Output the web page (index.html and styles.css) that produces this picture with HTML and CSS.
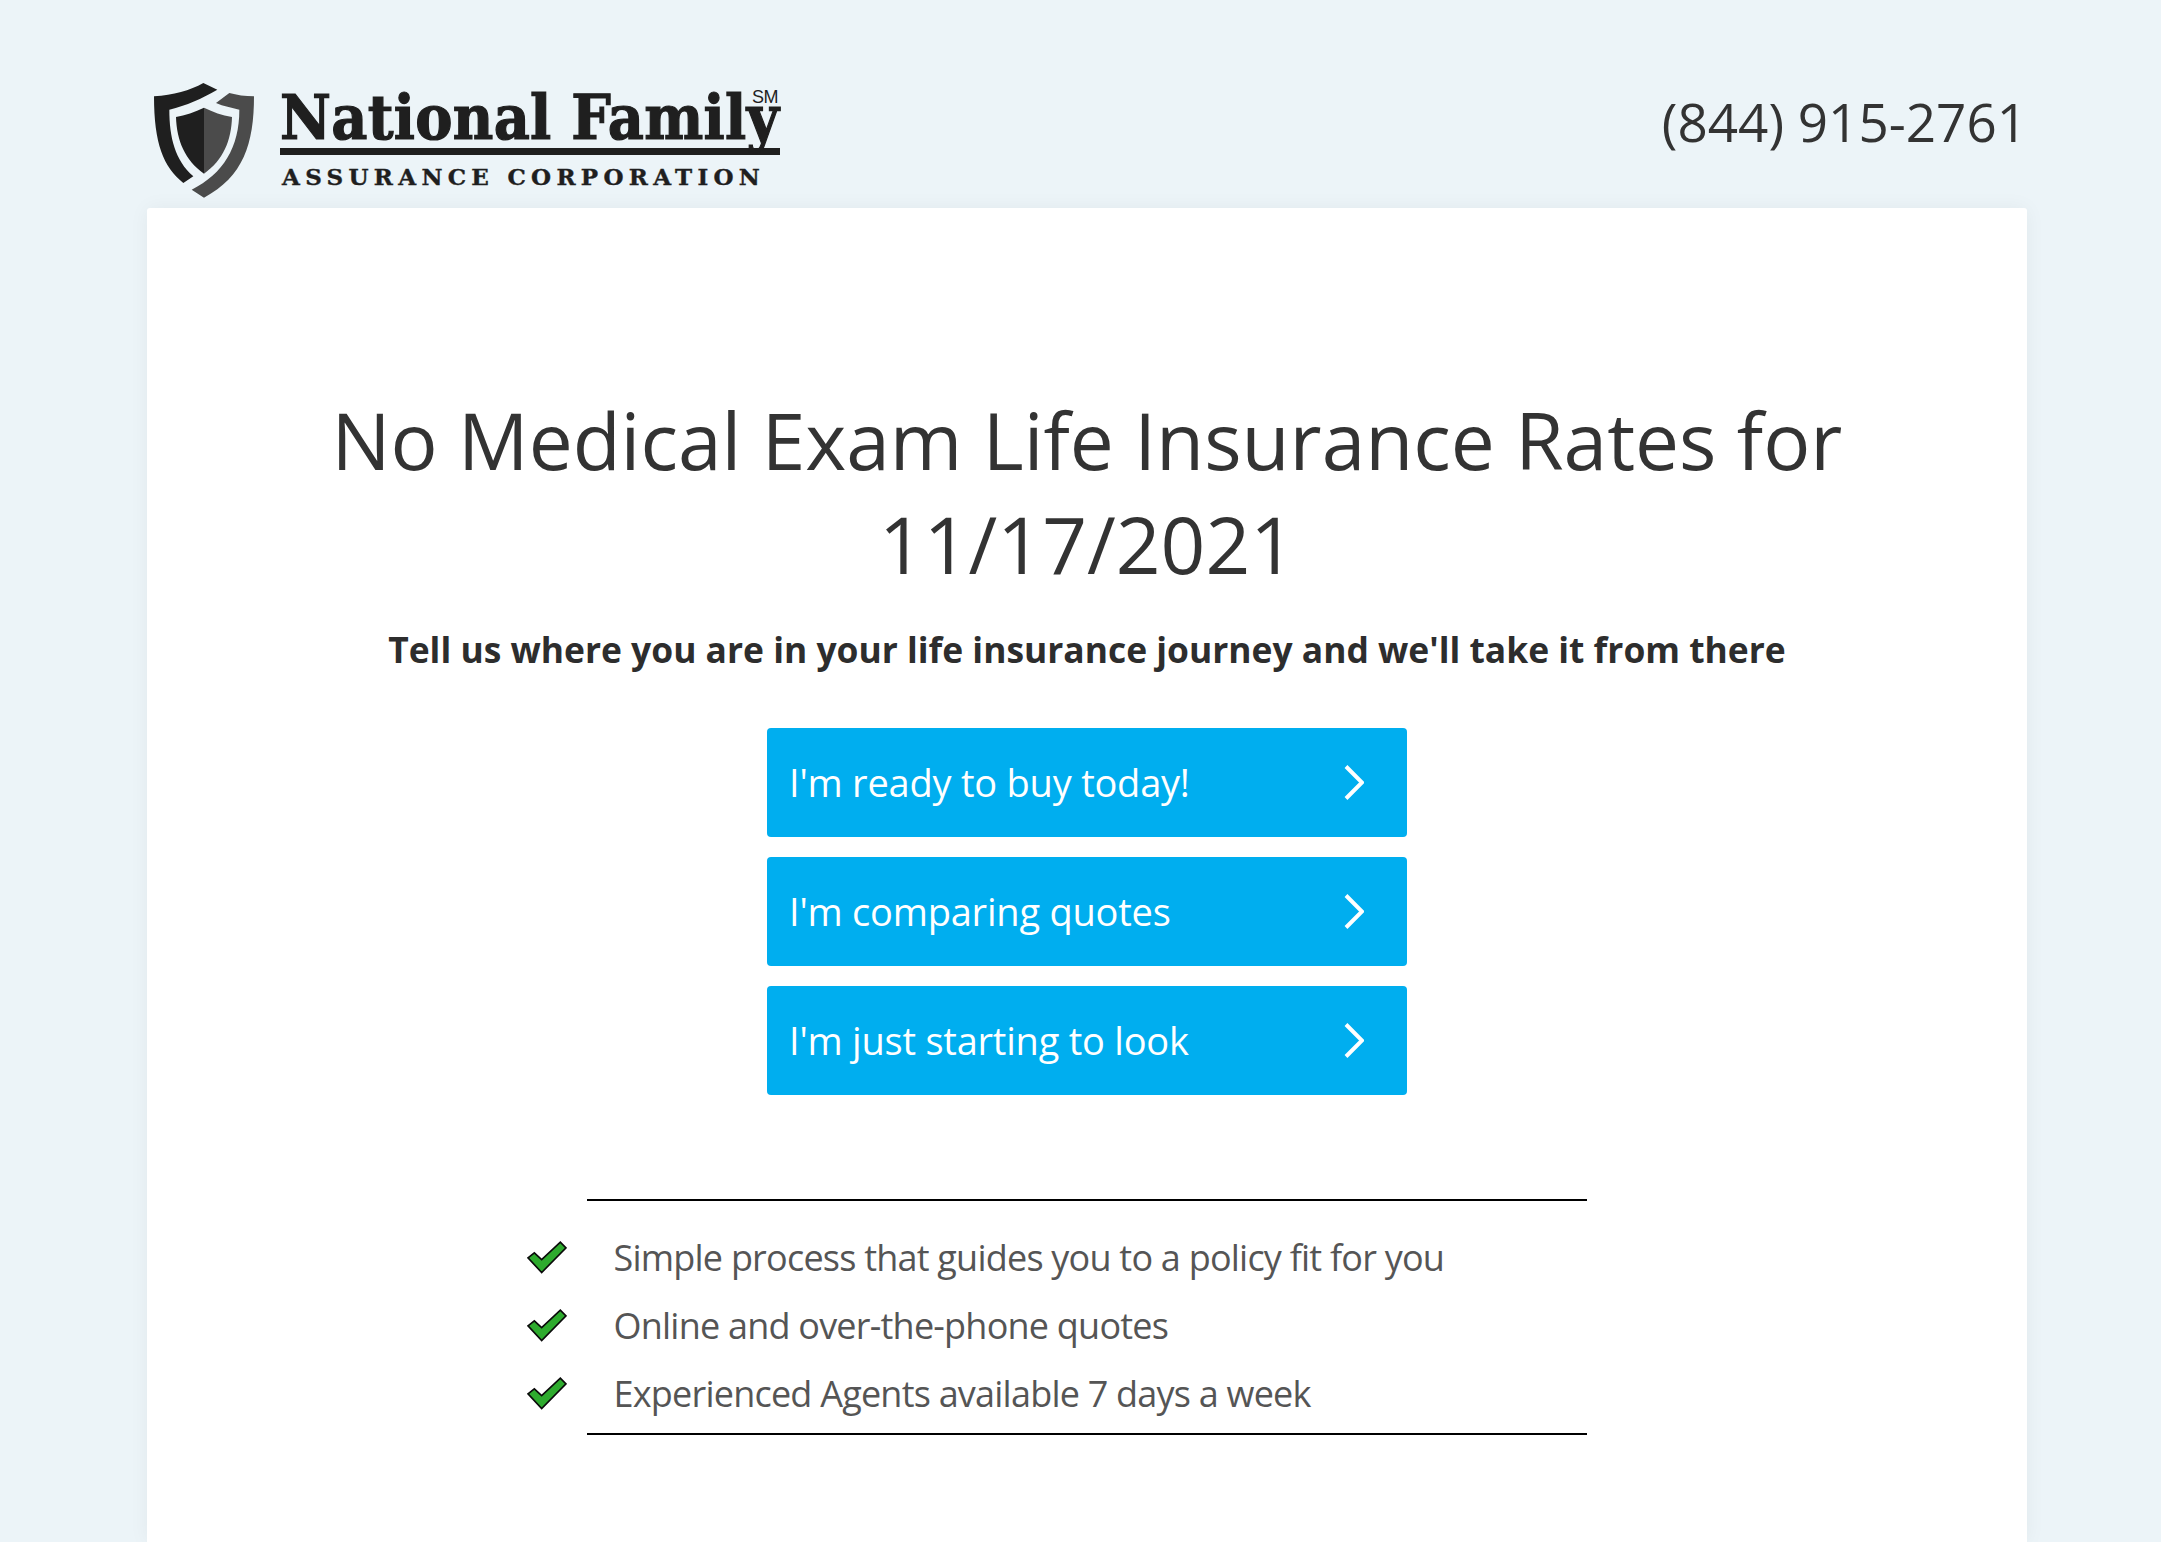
FILE: index.html
```html
<!DOCTYPE html>
<html lang="en">
<head>
<meta charset="utf-8">
<title>National Family Assurance Corporation</title>
<link rel="stylesheet" href="styles.css">
</head>
<body>
<header class="header">
  <div class="logo">
    <svg class="shield" viewBox="72 38 300 345" aria-hidden="true">
      <path class="dark" d="M72 78C130 75 180 60 220 38L262 58C215 85 170 105 118 118C118 200 135 270 190 318L160 338C100 290 72 220 72 78Z"/>
      <path class="gray" d="M298 68C320 74 345 78 372 78C372 220 340 320 222 382L185 358C280 310 328 230 328 118C305 112 280 108 258 98Z"/>
      <path class="dark" d="M222 112C195 125 165 135 138 140C140 210 165 270 222 310Z"/>
      <path class="gray" d="M222 112C250 125 275 135 306 140C304 210 280 270 222 310Z"/>
    </svg>
    <div class="wordmark">
      <div class="brand">National Family</div>
      <span class="sm">SM</span>
      <div class="brand-rule"></div>
      <div class="tagline">ASSURANCE CORPORATION</div>
    </div>
  </div>
  <div class="phone">(844) 915-2761</div>
</header>
<main class="card">
  <h1 class="title">No Medical Exam Life Insurance Rates for<br>11/17/2021</h1>
  <p class="subtitle">Tell us where you are in your life insurance journey and we'll take it from there</p>
  <div class="actions">
    <a class="action" href="#"><span>I'm ready to buy today!</span><svg class="chevron" viewBox="0 0 20 35"><path d="M2 1.5 18 17.5 2 33.5"/></svg></a>
    <a class="action" href="#"><span>I'm comparing quotes</span><svg class="chevron" viewBox="0 0 20 35"><path d="M2 1.5 18 17.5 2 33.5"/></svg></a>
    <a class="action" href="#"><span>I'm just starting to look</span><svg class="chevron" viewBox="0 0 20 35"><path d="M2 1.5 18 17.5 2 33.5"/></svg></a>
  </div>
  <section class="benefits">
    <ul class="benefit-list">
      <li class="benefit"><svg class="check" viewBox="80 185 120 98"><path d="M83 235 102 220 124 240 180 188 197 205 124 279Z"/></svg><span>Simple process that guides you to a policy fit for you</span></li>
      <li class="benefit"><svg class="check" viewBox="80 185 120 98"><path d="M83 235 102 220 124 240 180 188 197 205 124 279Z"/></svg><span>Online and over-the-phone quotes</span></li>
      <li class="benefit"><svg class="check" viewBox="80 185 120 98"><path d="M83 235 102 220 124 240 180 188 197 205 124 279Z"/></svg><span>Experienced Agents available 7 days a week</span></li>
    </ul>
  </section>
</main>
</body>
</html>
```
FILE: styles.css
```css
* { box-sizing: border-box; }
html, body { height: 100%; }
body {
  margin: 0;
  overflow: hidden;
  display: flex;
  flex-direction: column;
  background: #ecf4f8;
  color: #333;
  font-family: "Open Sans", "Liberation Sans", sans-serif;
}
.header {
  flex: none;
  height: 208px;
  padding: 0 0 0 154px;
  margin: 0 134px 0 0;
  display: flex;
  justify-content: space-between;
  align-items: flex-start;
}
.logo {
  display: flex;
  gap: 26px;
  padding-top: 83px;
}
.shield { width: 100px; height: 115px; }
.dark { fill: #1f1f1f; }
.gray { fill: #4b4b4b; }
.wordmark { position: relative; width: 500px; padding-top: 4px; }
.brand {
  font-family: "DejaVu Serif Condensed", "DejaVu Serif", serif;
  font-weight: 700;
  font-size: 62px;
  line-height: 62px;
  letter-spacing: .3px;
  -webkit-text-stroke: 1.2px #1f1f1f;
  color: #1f1f1f;
  white-space: nowrap;
}
.sm {
  position: absolute;
  left: 472px;
  top: 5px;
  font-family: "Liberation Sans", sans-serif;
  font-weight: 400;
  font-size: 18px;
  line-height: 18px;
  letter-spacing: -.5px;
  color: #1f1f1f;
}
.brand-rule { height: 7px; margin-top: -1px; background: #1f1f1f; }
.tagline {
  margin: 7px 0 0 2px;
  font-family: "DejaVu Serif", serif;
  font-weight: 700;
  font-size: 23px;
  line-height: 30px;
  letter-spacing: 5.3px;
  -webkit-text-stroke: .4px #1f1f1f;
  color: #1f1f1f;
  white-space: nowrap;
}
.phone {
  margin-top: 87px;
  font-size: 53px;
  line-height: 70px;
  color: #333;
}
.card {
  flex: 1;
  margin: 0 134px 0 147px;
  padding: 180px 0 0;
  background: #fff;
  border-radius: 3px 3px 0 0;
  box-shadow: 0 0 20px rgba(0, 0, 0, .05);
  display: flex;
  flex-direction: column;
  align-items: center;
}
.title {
  margin: 0;
  font-size: 78.4px;
  font-weight: 400;
  line-height: 104px;
  text-align: center;
  color: #333;
}
.subtitle {
  margin: 28px 0 0;
  font-size: 35.4px;
  font-weight: 700;
  line-height: 50px;
  color: #2d2d2d;
}
.actions {
  margin-top: 54px;
  display: flex;
  flex-direction: column;
  gap: 20px;
}
.action {
  width: 640px;
  height: 109px;
  padding: 0 43px 2px 22px;
  display: flex;
  align-items: center;
  justify-content: space-between;
  background: #00aeef;
  border-radius: 4px;
  color: #fff;
  font-size: 38px;
  letter-spacing: -.22px;
  text-decoration: none;
}
.chevron { width: 20px; height: 35px; margin-top: 2px; fill: none; stroke: #fff; stroke-width: 4; }
.benefits {
  width: 1000px;
  height: 236px;
  margin-top: 104px;
  border-top: 2px solid #000;
  border-bottom: 2px solid #000;
}
.benefit-list {
  margin: 31px 0 0 -60px;
  padding: 0;
  list-style: none;
  display: flex;
  flex-direction: column;
  gap: 18px;
}
.benefit {
  display: flex;
  align-items: center;
  gap: 46.5px;
  height: 50px;
  font-size: 36px;
  letter-spacing: -.78px;
  color: #555;
}
.check { width: 40px; height: 33px; fill: #2eab2e; stroke: #0a0a0a; stroke-width: 5; stroke-linejoin: miter; }
```
